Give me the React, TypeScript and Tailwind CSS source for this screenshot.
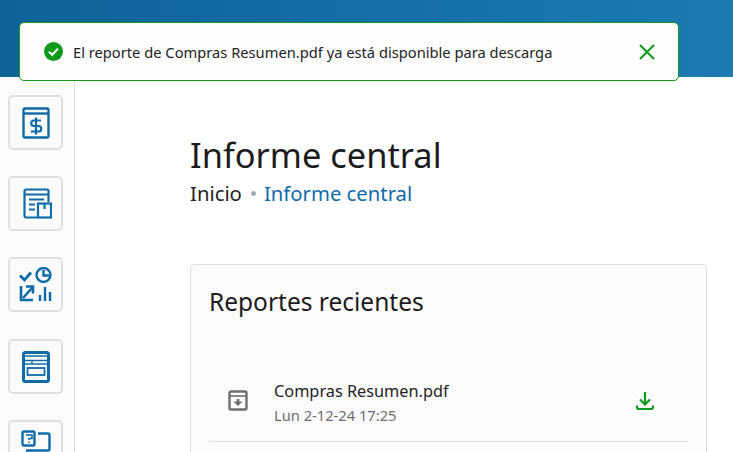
const font = "font-['Noto_Sans','Open_Sans',sans-serif]"

function BillIcon() {
  return (
    <svg width="28" height="32" viewBox="0 0 28 32" fill="none" stroke="#0f6ba8" strokeWidth="2.4">
      <rect x="1.5" y="1.5" width="25" height="29" rx="1.5" />
      <path d="M2 6.5h24" strokeWidth="2.4" />
      <path d="M19 13.5h-7a2.5 2.5 0 0 0 0 5.5h4.5a2.5 2.5 0 0 1 0 5.5H9M14 10.5v17" strokeWidth="2.2" />
    </svg>
  )
}

function FormBoxIcon() {
  return (
    <svg width="33" height="31" viewBox="-4 0 33 31" fill="none" stroke="#0f6ba8" strokeWidth="2.2">
      <path d="M14 29.5H3a1.5 1.5 0 0 1-1.5-1.5V3A1.5 1.5 0 0 1 3 1.5h21A1.5 1.5 0 0 1 25.5 3v11" />
      <path d="M2 6.5h23M6 11.5h15M6 16.5h6M6 21.5h6" />
      <rect x="15" y="15.5" width="13" height="14" />
      <path d="M21.5 16v5" />
    </svg>
  )
}

function ChartsIcon() {
  return (
    <svg width="33" height="35" viewBox="0 0 33 35" fill="none" stroke="#0f6ba8" strokeWidth="2.4">
      <path d="M1 8.5l4.5 4.5L12 5.5" strokeWidth="2.8" />
      <circle cx="24.5" cy="8" r="7" />
      <path d="M24.5 3v5.5H30" />
      <path d="M2 19v14h12" strokeWidth="2.6" />
      <path d="M4 31l9-10M7 19.5h7v7" strokeWidth="2.6" />
      <path d="M21 34v-6M26 34V20M31 34V25" strokeWidth="2.4" />
    </svg>
  )
}

function WindowIcon() {
  return (
    <svg width="28" height="32" viewBox="0 0 28 32" fill="none" stroke="#0f6ba8">
      <rect x="1.5" y="1.5" width="25" height="29" rx="2" strokeWidth="3" />
      <path d="M3 5h22" strokeWidth="1.5" />
      <path d="M3 9.5h22M3 13h22M10 9.5V13" strokeWidth="1.3" />
      <rect x="5.5" y="17" width="17" height="7" strokeWidth="1.8" />
    </svg>
  )
}

function HelpCardIcon() {
  return (
    <svg width="30" height="22" viewBox="0 0 30 22" fill="none" stroke="#0f6ba8" strokeWidth="2.4">
      <path d="M17 3.5h10a1.5 1.5 0 0 1 1.5 1.5V19a1.5 1.5 0 0 1-1.5 1.5H5" />
      <rect x="1.5" y="1.5" width="12" height="14" rx="1.5" />
      <path d="M5 5h6v3.5H8v1.5M8 11.5v1.5" strokeWidth="1.5" />
    </svg>
  )
}

function ArchiveIcon() {
  return (
    <svg width="20" height="21" viewBox="0 0 20 21" fill="none" stroke="#6f6f6f" strokeWidth="2.4">
      <path d="M3 1.5h14a1.5 1.5 0 0 1 1.5 1.5v15a1.5 1.5 0 0 1-1.5 1.5H3A1.5 1.5 0 0 1 1.5 18V3A1.5 1.5 0 0 1 3 1.5z" />
      <path d="M2 6h16" strokeWidth="1.6" />
      <path d="M10 9v4" strokeWidth="2.6" />
      <path d="M5.5 11.5h9L10 16z" fill="#6f6f6f" stroke="none" />
    </svg>
  )
}

function DownloadIcon() {
  return (
    <svg width="20" height="20" viewBox="0 0 20 20" fill="none" stroke="#109a1c" strokeWidth="2.2">
      <path d="M10 1v12M5 8.5l5 5 5-5" />
      <path d="M2 14.5v1.5a2 2 0 0 0 2 2h12a2 2 0 0 0 2-2v-1.5" />
    </svg>
  )
}

export default function App() {
  const navItems = [
    { id: "bill", icon: <BillIcon />, className: "" },
    { id: "form", icon: <FormBoxIcon />, className: "" },
    { id: "charts", icon: <ChartsIcon />, className: "" },
    { id: "window", icon: <WindowIcon />, className: "mt-px" },
    { id: "help", icon: <HelpCardIcon />, className: "pb-[14px]" },
  ]

  return (
    <div className={`relative h-[452px] w-[733px] overflow-hidden bg-white ${font}`}>
      {/* Top bar */}
      <div className="h-[77px] bg-gradient-to-r from-[#0e6298] to-[#1c7bb1]" />

      {/* Toast */}
      <div className="absolute left-[19px] top-[22px] flex h-[59px] w-[660px] items-center justify-between rounded-[5px] border border-[#109a1c] bg-[#fdfdfd] pl-[24px] pr-[23px]">
        <div className="flex items-center gap-[10px]">
          <svg width="19" height="19" viewBox="0 0 19 19">
            <circle cx="9.5" cy="9.5" r="9.5" fill="#109a1c" />
            <path d="M5 9.8l3.2 3L14 6.6" fill="none" stroke="#fff" strokeWidth="2" />
          </svg>
          <span className="text-[14.7px] leading-5 text-[#242424]">
            El reporte de Compras Resumen.pdf ya está disponible para descarga
          </span>
        </div>
        <svg width="16" height="16" viewBox="0 0 16 16" fill="none" stroke="#109a1c" strokeWidth="2">
          <path d="M1 1l14 14M15 1L1 15" />
        </svg>
      </div>

      <div className="flex h-[375px]">
        {/* Sidebar */}
        <aside className="flex w-[75px] shrink-0 flex-col gap-[26px] border-r border-[#dedede] bg-[#fbfbfb] pl-[8px] pt-[18px]">
          {navItems.map((item) => (
            <button
              key={item.id}
              className={`flex h-[55px] w-[55px] shrink-0 items-center justify-center rounded-[5px] border-2 border-[#e0e0e0] bg-[#fbfbfb] ${item.className}`}
            >
              {item.icon}
            </button>
          ))}
        </aside>

        {/* Main */}
        <main className="flex-1 pl-[115px] pr-[26px] pt-[53px]">
          <h1 className="text-[34.4px] leading-[49px] text-[#1c1c1c]">Informe central</h1>
          <div className="flex items-center text-[20.3px] leading-[28px]">
            <span className="text-[#242424]">Inicio</span>
            <span className="ml-[9px] mr-[8px] h-[5px] w-[5px] rounded-full bg-[#a3abb5]" />
            <span className="text-[#0f6ba8]">Informe central</span>
          </div>

          <section className="mt-[57px] h-[188px] rounded-t-[5px] border border-b-0 border-[#dedede] bg-[#fbfbfb] px-[18px] pt-[19px]">
            <h2 className="text-[24.5px] leading-[36px] text-[#1c1c1c]">Reportes recientes</h2>
            <div className="mt-[42px] flex h-[80px] items-start border-b border-[#dedede] pl-[19px] pr-[33px]">
              <div className="mt-[28px] flex items-center">
                <ArchiveIcon />
              </div>
              <div className="ml-[26px] mt-[17px] flex-1">
                <div className="text-[16.3px] leading-[24px] text-[#242424]">Compras Resumen.pdf</div>
                <div className="mt-[2px] text-[14.7px] leading-[20px] text-[#6f6f6f]">Lun 2-12-24 17:25</div>
              </div>
              <div className="mt-[29px]">
                <DownloadIcon />
              </div>
            </div>
          </section>
        </main>
      </div>
    </div>
  )
}
